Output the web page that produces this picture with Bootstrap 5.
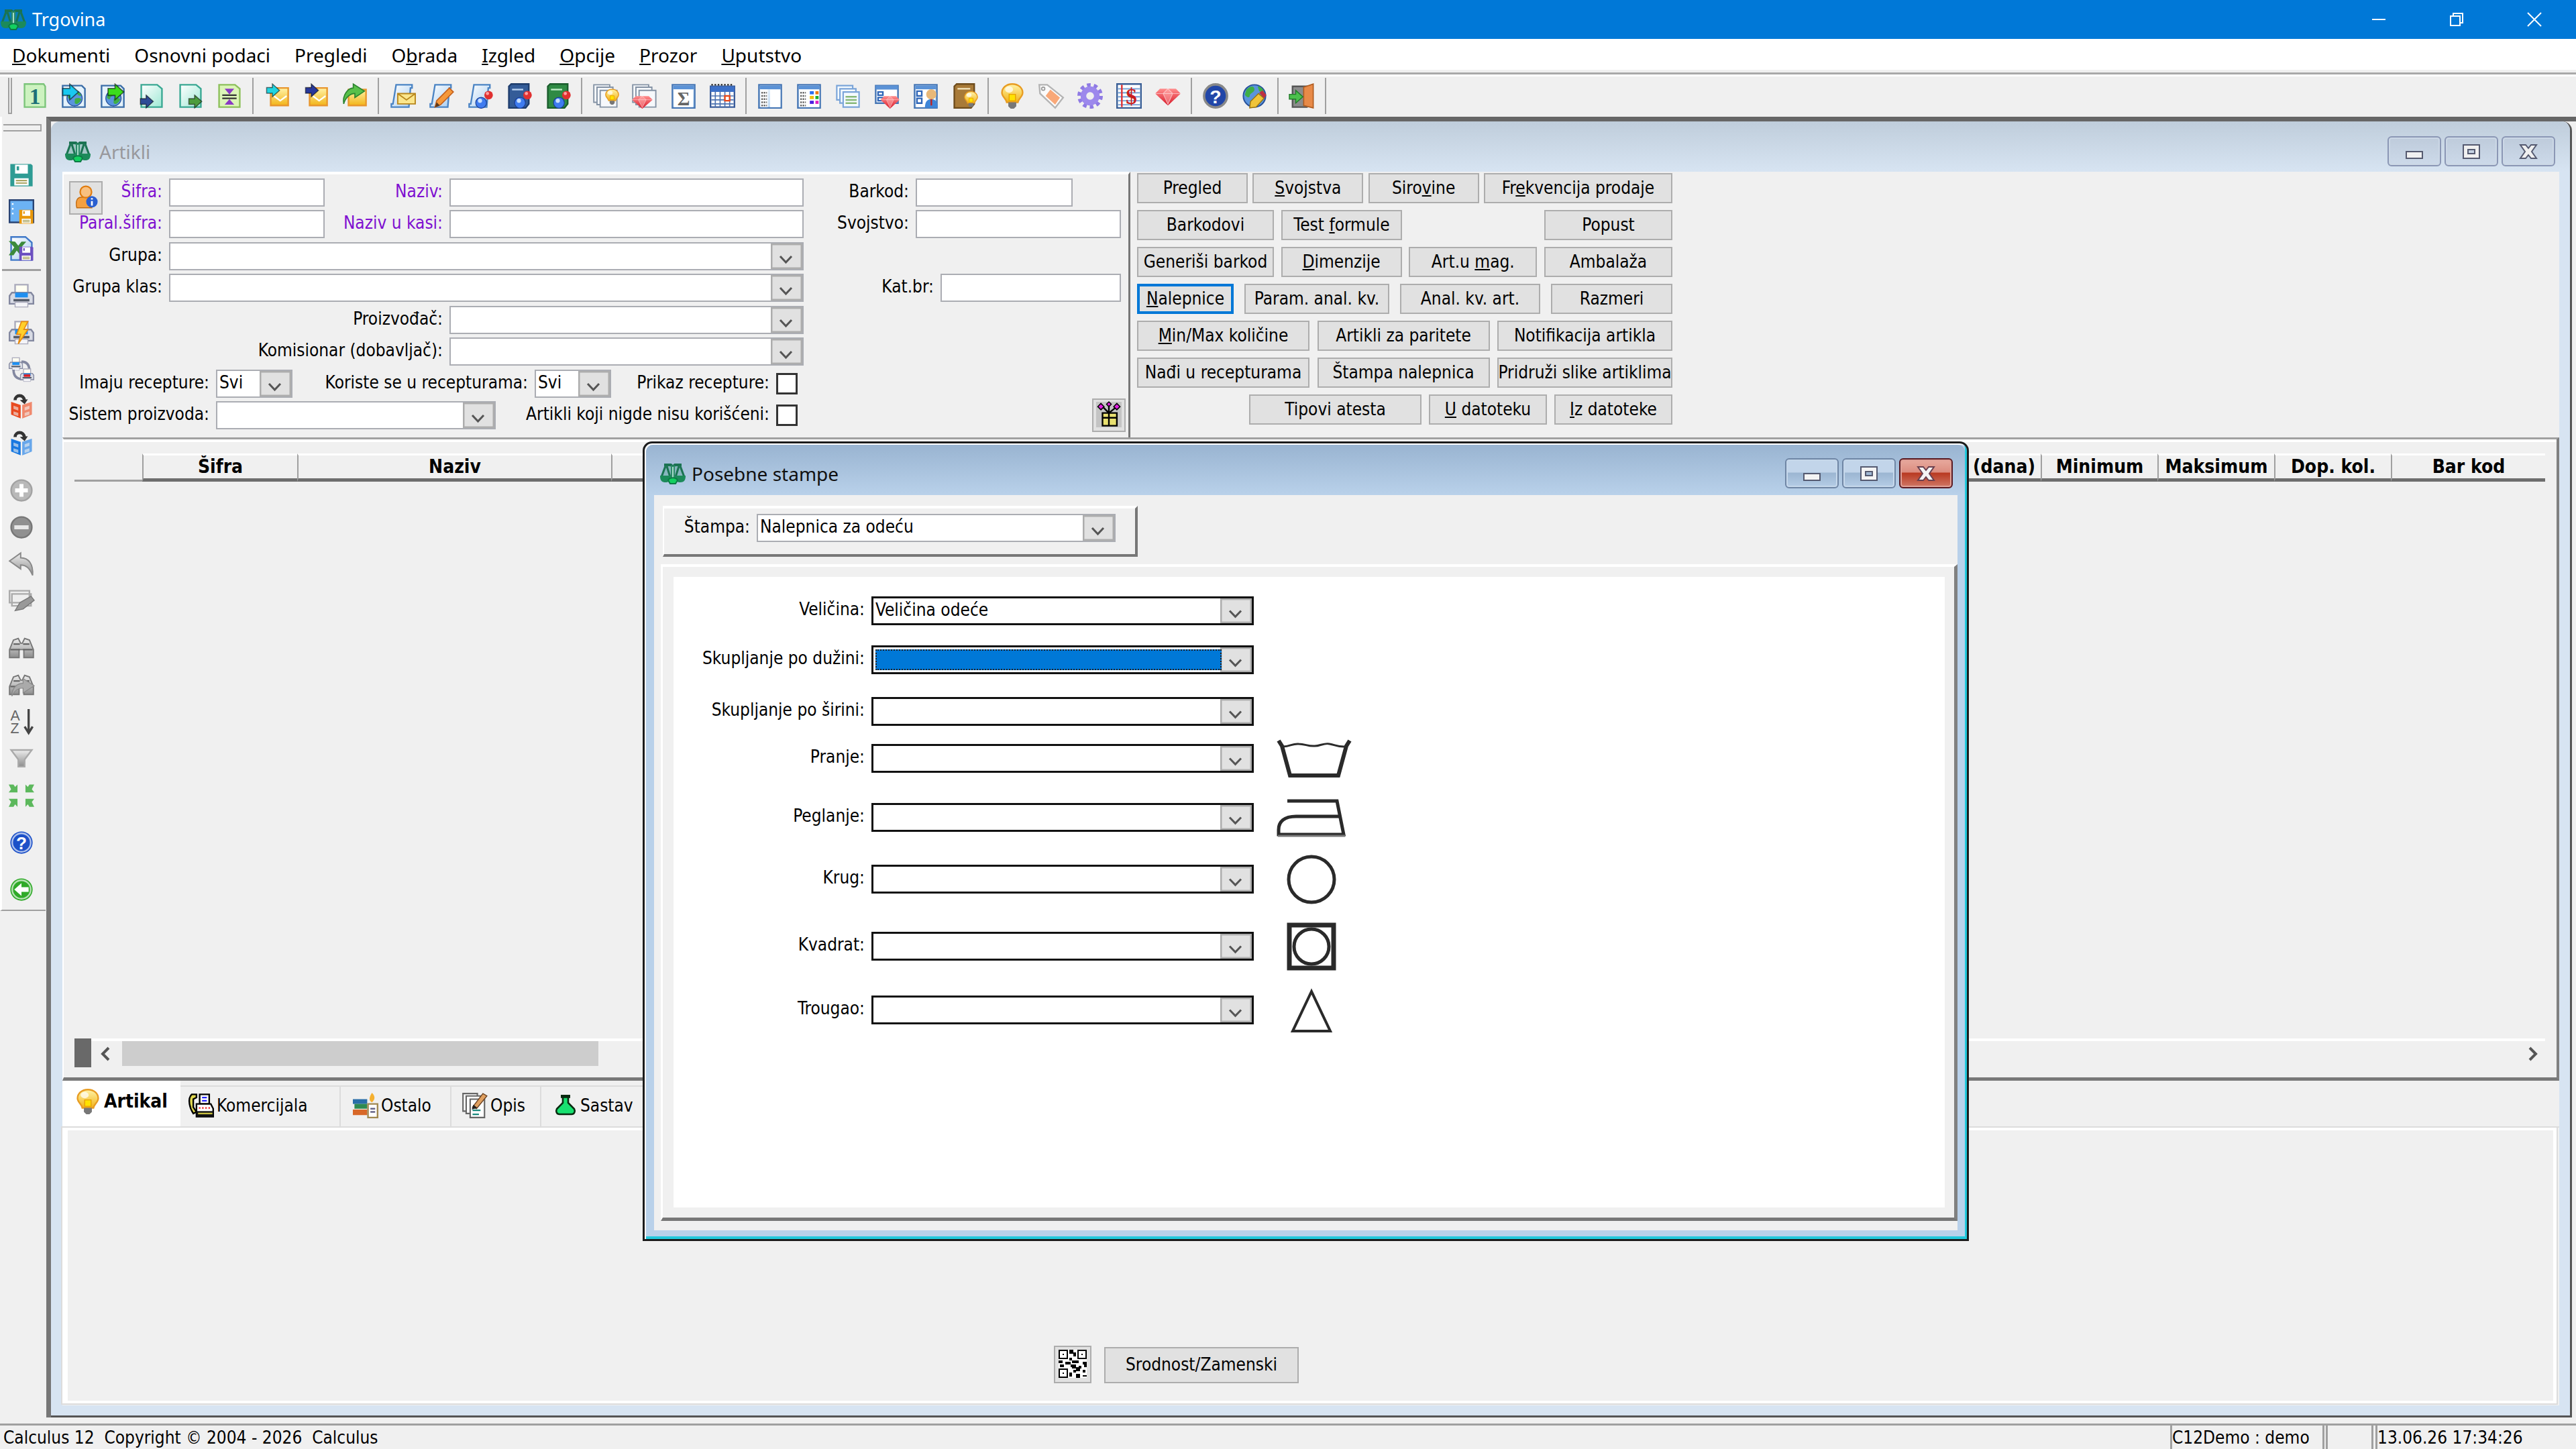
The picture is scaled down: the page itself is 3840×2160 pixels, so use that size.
<!DOCTYPE html>
<html lang="sr-Latn">
<head>
<meta charset="utf-8">
<meta name="viewport" content="width=device-width, initial-scale=1">
<title>Trgovina</title>
<link rel="stylesheet" href="https://cdn.jsdelivr.net/npm/bootstrap@5.3.0/dist/css/bootstrap.min.css">
<style>
:root{--face:#f0f0f0;--ui:"DejaVu Sans Condensed","DejaVu Sans",sans-serif;--caption:"Noto Sans","Open Sans",sans-serif}
body{font-family:var(--ui);font-size:26px;line-height:30px;color:#000;background:var(--face);min-height:100vh;overflow:hidden}
button,input,select{font:inherit;color:inherit;border-radius:0}
svg{display:block;flex:none;overflow:visible}
.ico{width:38px;height:40px}
.app-title{background:#0078d7;color:#fff;height:58px;font-family:var(--caption);font-size:27px}
.app-title button{width:116px;height:58px;background:none;border:0;color:#fff}
.logo{width:40px;height:32px}
.menu-bar{background:#fff;height:46px;font-family:var(--caption);font-size:28px;padding-left:18px;gap:36px}
.menu-bar a{color:#000;text-decoration:none;line-height:48px}
.tool-bar{height:66px;border-top:3px solid #a9a9a9;box-shadow:inset 0 3px #fff;margin-top:4px}
.tool-bar button,.side-bar button{background:none;border:0;padding:0;width:58px;height:58px}
.grip{width:6px;height:54px;border:2px solid #a0a0a0;border-top:0;margin:0 5px 0 12px}
.tsep{width:2px;height:54px;background:#a0a0a0;margin:0 6px 0 5px}
.side-bar{flex:none;width:68px;border-left:3px solid #fff;padding-top:11px;height:1184px;border-bottom:2px solid #a0a0a0}
.side-bar .sgrip{width:57px;height:11px;border:2px solid #a0a0a0;border-left:0;margin:0 0 37px 2px}
.side-bar button{height:55px;display:flex;align-items:center;justify-content:center}
.side-bar .sgroup{margin-bottom:15px}
.side-bar .sgroup.ruled{border-bottom:3px solid #a0a0a0;padding-bottom:3px;margin-bottom:9px;width:58px}
.mdi{border-left:7px solid #777;border-top:7px solid #666;position:relative;padding-right:6px;margin-left:1px}
.win{background:#d7e4f2;border-right:3px solid #555;border-bottom:3px solid #555;border-radius:14px 14px 0 0;padding:0 16px 15px 17px}
.win-title{height:75px;font-family:var(--caption);font-size:28px;color:#98989c;background:linear-gradient(#bfcddb,#d7e4f2);margin:0 -16px 0 -17px;padding:14px 22px 0 20px;border-radius:14px 14px 0 0}
.wbtns{gap:5px}
.wbtn{width:80px;height:45px;border:2px solid #8b97b5;border-radius:6px;background:linear-gradient(#becbdb,#cddaea);box-shadow:inset 0 0 0 2px #ccd8e6;padding:0}
.win-body{background:var(--face)}
.filters{width:1592px;border-top:4px solid #fff;border-left:2px solid #fff;border-right:3px solid #777;padding:6px 0 12px;height:396px;flex:none}
.frow{height:42px;display:flex;align-items:center}
.frow label,.care label,.stampa label{text-align:right;padding-right:10px;white-space:nowrap;flex:none;line-height:38px;height:42px}
.lb1{width:157px;height:42px}.lb2{width:186px}.lb3{width:167px}.lb4{width:204px}.lb5{width:575px}.lb6{width:227px}.lb7{width:361px}.lb8{width:246px}.lb9{width:418px}
.w232{width:232px}.w234{width:234px}.w269{width:269px}.w306{width:306px}.w528{width:528px}.w946{width:946px}.w114{width:114px}.w417{width:417px}
.violet{color:#7f10d0}
.fld{height:42px;border:2px solid #abadb3;background:#fff;padding:0 4px;flex:none;line-height:34px}
.pick{appearance:none;height:42px;border:2px solid #abadb3;padding:0 50px 4px 3px;flex:none;background:#fff url("data:image/svg+xml,%3Csvg xmlns='http://www.w3.org/2000/svg' width='47' height='38' viewBox='0 0 47 38' preserveAspectRatio='none'%3E%3Crect x='1' y='1' width='45' height='36' fill='%23e1e1e1' stroke='%23adadad' stroke-width='3'/%3E%3Cpath d='M14 19l8.500 9 8.500-9' fill='none' stroke='%23555' stroke-width='3'/%3E%3C/svg%3E") right 0 top 0/47px 100% no-repeat}
.chk{appearance:none;width:32px;height:32px;border:3px solid #333;background:#fff;margin:0}
.pbtn{height:45px;background:#e1e1e1;border:2px solid #adadad;padding:0 0 2px;white-space:nowrap;line-height:38px;flex:none;display:flex;justify-content:center;align-items:center}
.pbtn.on{border:4px solid #0078d7}
.icobtn{width:50px;height:50px}
.qrbtn{width:56px;height:56px}
.cmds{width:798px;margin:2px 0 0 10px;gap:10px}
.b144{width:144px}.b165{width:165px}.b176{width:176px}.b180{width:180px}.b181{width:181px}.b191{width:191px}.b204{width:204px}.b209{width:209px}.b216{width:216px}.b257{width:257px}.b261{width:261px}.b281{width:281px}.b290{width:290px;height:54px}
.gap11{gap:11px}
.sheet{border-top:3px solid #a0a0a0;border-left:2px solid #fff;border-right:4px solid #808080;border-bottom:5px solid #787878;box-shadow:inset 0 4px #fff;padding:21px 17px 15px 16px}
.cols{table-layout:fixed;width:100%;border-collapse:separate;border-spacing:0}
.cols th{height:42px;border-top:3px solid #fff;border-bottom:5px solid #6e6e6e;border-left:2px solid #a0a0a0;text-align:center;font-size:28px;line-height:32px;padding:0;white-space:nowrap;overflow:hidden}
.cols th:first-child{width:101px;border-left:0;border-top-color:transparent;border-bottom:3px solid #a0a0a0}
.c231{width:231px}.c468{width:468px}.c174{width:174px}.c230{width:230px}
.hscroll{border-top:4px solid #fff;height:43px;gap:13px}
.hscroll .split{width:25px;height:43px;background:#696969;margin-top:-4px}
.hscroll .thumb{width:710px;height:37px;background:#cdcdcd}
.tab-strip{height:70px;border-bottom:2px solid #dcdcdc}
.tab-strip a{color:#000;text-decoration:none;height:61px;border:2px solid #dcdcdc;border-left-width:0;border-bottom:0;display:flex;align-items:center;padding:0 0 4px 12px;gap:4px;margin-top:7px;flex:none}
.tab-strip a.on{background:#fff;height:70px;margin-top:0;width:176px;font-size:28px;font-weight:bold;padding:0 0 8px 18px;border:0}
.tab-strip .tw1{width:239px}.tab-strip .tw2{width:165px;padding-left:18px}.tab-strip .tw3{width:134px;padding-left:16px}.tab-strip .tw4{width:180px;padding-left:20px}
.page-box{height:411px;border:4px solid #fff;border-left-width:8px;border-right-width:5px;margin-right:4px;padding:0 0 26px 1470px;gap:19px;outline:2px solid #dcdcdc;margin-bottom:3px}
.dlg{position:absolute;left:882px;top:477px;width:1977px;height:1192px;border:3px solid #1c1c1c;border-radius:14px 14px 0 0;background:#b9d1ea;padding:0 14px 13px 14px;box-shadow:inset 2px 2px #fff,inset -3px -4px #22c8dc}
.dlg-title{height:75px;font-family:var(--caption);font-size:28px;margin:2px -11px 0 -12px;padding:10px 18px 0 20px;border-radius:10px 10px 0 0;background:linear-gradient(#99b4d1,#b9d1ea);color:#111}
.dlg-title .wbtn{background:linear-gradient(#c2d5ea 45%,#9cb6d2 50%,#b5cde6);border-color:#6f86a5;box-shadow:inset 0 0 0 2px #c6d8eb}
.dlg-title .wbtn.shut{background:linear-gradient(#e5a498 10%,#dc8d80 45%,#b93a22 50%,#d07866);border-color:#5a1a22;box-shadow:inset 0 0 0 2px #e0a096}
.dlg-body{background:var(--face);height:1096px;padding:16px 0 14px 10px}
.stampa{width:708px;height:76px;border-top:4px solid #fff;border-left:2px solid #fff;border-right:4px solid #777;border-bottom:4px solid #777;margin-left:3px;padding-top:8px}
.stampa label{width:138px}
.stampa .pick{width:535px}
.care-frame{margin-top:11px;height:979px;border-top:4px solid #fff;border-left:3px solid #fff;border-right:5px solid #808080;border-bottom:5px solid #777;padding:15px 14px 15px 16px}
.care{background:#fff;height:100%;display:grid;grid-template-columns:295px 570px 1fr;grid-template-rows:73px 77px 70px 88px 92px 100px 95px 42px;align-items:start;padding-top:29px}
.care .pick{width:100%;border:3px solid #111;height:43px}
.care .sym{height:43px;display:flex;align-items:center;padding-left:33px}
.care .sym svg{fill:none;stroke:#2a2a2a;stroke-width:5}
.hot{position:relative;display:block}
.hot .pick{display:block}
.hot::after{content:"";position:absolute;left:6px;top:6px;right:48px;bottom:6px;background:#0078d7;border:2px dotted #222;pointer-events:none}
.status{height:38px;border-top:3px solid #a0a0a0;white-space:pre;line-height:36px;padding-left:5px;margin-top:9px}
.status .cell{border-left:3px solid #a0a0a0;height:36px}
.s1{width:227px}.s2{width:5px}.s3{width:68px}.s4{width:6px}.s5{width:299px}
</style>
</head>
<body class="d-flex flex-column">
<svg width="0" height="0" class="position-absolute" aria-hidden="true">
<defs>
<linearGradient id="gy" x1="0" y1="0" x2="0" y2="1"><stop offset="0" stop-color="#fff3a8"/><stop offset="1" stop-color="#f2b418"/></linearGradient>
<linearGradient id="gb" x1="0" y1="0" x2="1" y2="1"><stop offset="0" stop-color="#fff"/><stop offset="1" stop-color="#a8cdf0"/></linearGradient>
<linearGradient id="gg" x1="0" y1="0" x2="1" y2="1"><stop offset="0" stop-color="#fff"/><stop offset="1" stop-color="#9ee8d4"/></linearGradient>
<linearGradient id="gr" x1="0" y1="0" x2="0" y2="1"><stop offset="0" stop-color="#ff8d8d"/><stop offset="1" stop-color="#d81828"/></linearGradient>
<linearGradient id="gs" x1="0" y1="0" x2="0" y2="1"><stop offset="0" stop-color="#eee"/><stop offset="1" stop-color="#8c8c8c"/></linearGradient>
<symbol id="scales" viewBox="0 0 40 32"><path d="M8 2h10l2 3 2-3h10l7 20-4 6H5l-4-6z" fill="#1c8a5a" fill-opacity=".25"/><g fill="none" stroke="#1b7352"><path d="M7 3h10l3 3 3-3h10" stroke-width="4"/><path d="M9 5L3 21M11 5l5 16M31 5l6 16M29 5l-5 16" stroke-width="3"/></g><path d="M1 19h16c0 8-3 10-8 10s-8-2-8-10zM23 19h16c0 8-3 10-8 10s-8-2-8-10z" fill="#1c8a5a"/><path d="M17 4h6v22h-6z" fill="#2c8a68"/><path d="M19 6h2v18h-2z" fill="#a8dcc8"/><path d="M13 26c2-5 12-5 14 0l-3 5h-8z" fill="#12d060" stroke="#0d7a45" stroke-width="2"/></symbol>
<symbol id="ar" viewBox="0 0 10 10"><path d="M.5 3h4V.500l5 4.500-5 4.500V7h-4z" fill="currentColor" stroke="#0008" stroke-width=".7"/></symbol>
<symbol id="paper" viewBox="0 0 16 16"><path d="M1.500 1h10l3 2.500V15h-13z" fill="url(#gg)" stroke="#3aa893"/></symbol>
<symbol id="globe" viewBox="0 0 16 16"><circle cx="8" cy="8" r="7" fill="#5a94dc" stroke="#27509a" stroke-width=".8"/><path d="M3 4c3-3 5-2 5 0s-3 2-3 4-3 0-3-1zM9 8c3-1 5 0 5 1s-3 5-5 4 0-3-1-4zM10 2c2 0 4 2 4 4l-3-1z" fill="#3fae46"/></symbol>
<symbol id="gem" viewBox="0 0 16 16" preserveAspectRatio="none"><path d="M3 2h10l3 4-8 10-8-10z" fill="url(#gr)"/><path d="M0 6h16M5 6l3 9 3-9-3-4z" fill="#ffb0b0" fill-opacity=".5" stroke="#fff" stroke-opacity=".5" stroke-width=".5"/></symbol>
<symbol id="bulb" viewBox="0 0 16 16"><path d="M8 .500c4 0 6.500 2.600 6.500 5.500 0 2.500-2.500 3.500-3 6h-7c-.500-2.500-3-3.500-3-6C1.500 3.100 4 .500 8 .500z" fill="url(#gy)" stroke="#e89c22"/><path d="M6 7h4v4H6z" fill="#ffe200" stroke="#e8a200" stroke-width=".6"/><path d="M5.500 12h5v2.500L9 16H7l-1.500-1.500z" fill="#777"/><ellipse cx="6" cy="4" rx="2.500" ry="2" fill="#fff" opacity=".7"/></symbol>
<symbol id="man" viewBox="0 0 16 16"><circle cx="13.200" cy="7.500" r="2.700" fill="#e03030"/><circle cx="12.500" cy="6.500" r="1" fill="#ffa0a0"/><circle cx="8.500" cy="12.300" r="3.400" fill="#3f7cf0" stroke="#1b3f96" stroke-width=".5"/><circle cx="7.800" cy="11" r="1.300" fill="#c8e0ff"/></symbol>
<symbol id="flop" viewBox="0 0 16 16"><path d="M1 1h13l1 1v13H1z" fill="currentColor"/><path d="M4 1.500h8V7H4zM3.500 10h9v4.500h-9z" fill="#fff"/><path d="M5 2.500h1.500v2.500H5z" fill="currentColor"/><path d="M4.500 11.500h7M4.500 13h7" stroke="#a09a50" stroke-width=".8"/></symbol>
<symbol id="win" viewBox="0 0 16 16"><path d="M1 1h14v14.500H1z" fill="url(#gb)" stroke="#4676b4"/><path d="M1.500 1.500h13v2.300h-13z" fill="#5b92d6"/></symbol>
<symbol id="scroll" viewBox="0 0 16 16"><path d="M4 1h10v2h-1L12 15H1v-2h1z" fill="url(#gb)" stroke="#4b84c4"/></symbol>
<symbol id="stack" viewBox="0 0 16 16"><g fill="#f6f8fb" stroke="#8492a4" stroke-width=".8"><path d="M.500 1h10v11H.500z"/><path d="M2.500 2.500h10v11h-10z"/><path d="M4.500 4.500h10.500V15H4.500z"/></g></symbol>
<symbol id="printer" viewBox="0 0 16 16"><path d="M4 1h8v6H4z" fill="#fffef2" stroke="#aab"/><path d="M2 6h12l1.500 2v5h-15V8z" fill="#d8dbe4" stroke="#8388a0"/><path d="M4 6h8v3H4z" fill="#1f8ff0"/><path d="M3 10h10v1.500H3z" fill="#555b68"/><path d="M4 12h8v3H4z" fill="#f4f4f8" stroke="#aab" stroke-width=".6"/></symbol>
<symbol id="cube" viewBox="0 0 16 16"><path d="M1.500 5l6 2v8.500l-6-2.500zM14.500 5l-6 2v8.500l6-2.500z" fill="currentColor"/><path d="M14.500 5l-6 2v8.500l6-2.500z" fill="#fff" opacity=".35"/><path d="M3 7.500l3 1v2l-3-1zM3 11l3 1v2l-3-1zM10 8.500l3-1v2l-3 1zM10 12l3-1v2l-3 1z" fill="#f0f0f0" opacity=".6"/><path d="M4 4C4 .500 9.500 0 10 4.500" fill="none" stroke="#333" stroke-width="2"/><path d="M7 4l5-.500-2 3z" fill="#333"/></symbol>
<symbol id="bino" viewBox="0 0 16 16"><path d="M3 3l3-1 1.500 3h1L10 2l3 1 2.500 6v5h-6V9h-3v5h-6V9z" fill="url(#gs)" stroke="#777" stroke-width=".8"/><path d="M1 9h6M9 9h6M3 5.500h4M9 5.500h4" stroke="#666"/></symbol>
<symbol id="glow" viewBox="0 0 16 16"><circle cx="8" cy="8" r="7" fill="currentColor"/><circle cx="8" cy="8" r="5.800" fill="none" stroke="#fff" stroke-opacity=".65" stroke-width="1"/></symbol>
</defs>
</svg>

<header class="app-title d-flex align-items-center">
  <svg class="logo"><use href="#scales"/></svg><span class="ms-2">Trgovina</span>
  <div class="ms-auto d-flex me-1">
    <button aria-label="Umanji" class="d-flex align-items-center justify-content-center"><svg width="20" height="20"><path d="M0 10h20" stroke="#fff" stroke-width="2"/></svg></button>
    <button aria-label="Vrati" class="d-flex align-items-center justify-content-center"><svg width="20" height="20" fill="none" stroke="#fff" stroke-width="2"><path d="M1 5h14v14H1zM5 5V1h14v14h-4"/></svg></button>
    <button aria-label="Zatvori" class="d-flex align-items-center justify-content-center"><svg width="20" height="20" stroke="#fff" stroke-width="2"><path d="M0 0l20 20M20 0L0 20"/></svg></button>
  </div>
</header>
<nav class="menu-bar d-flex" aria-label="Meni">
  <a href="#"><u>D</u>okumenti</a><a href="#">Osnovni podaci</a><a href="#">Pregledi</a><a href="#">O<u>b</u>rada</a><a href="#"><u>I</u>zgled</a><a href="#"><u>O</u>pcije</a><a href="#"><u>P</u>rozor</a><a href="#"><u>U</u>putstvo</a>
</nav>
<div class="tool-bar d-flex align-items-center" role="toolbar">
  <span class="grip"></span>
  <button class="d-flex align-items-center justify-content-center" aria-label="Dokument 1"><svg class="ico" viewBox="0 0 16 16"><path d="M1.500.500h12l1 1.500v13h-13z" fill="#cdf2c0" stroke="#7cc47a"/><text x="8" y="13" font-family="Liberation Serif" font-weight="bold" font-size="14" text-anchor="middle" fill="#1c7078">1</text></svg></button>
  <button class="d-flex align-items-center justify-content-center" aria-label="Preuzmi"><svg class="ico" viewBox="0 0 16 16"><path d="M1 1.500h12l2 2V15H1z" fill="#e4f2fb" stroke="#3c6ea8"/><use href="#globe" x="3" y="4" width="11" height="11"/><use href="#ar" x="0" y="0" width="12" height="11" color="#19c8f0"/></svg></button>
  <button class="d-flex align-items-center justify-content-center" aria-label="Pošalji"><svg class="ico" viewBox="0 0 16 16"><path d="M1 1.500h12l2 2V15H1z" fill="#e4f2fb" stroke="#3c6ea8"/><use href="#globe" x="3" y="4" width="11" height="11"/><use href="#ar" x="4" y="0" width="12" height="11" color="#3bdc1c"/></svg></button>
  <button class="d-flex align-items-center justify-content-center" aria-label="Ulaz"><svg class="ico" viewBox="0 0 16 16"><use href="#paper"/><use href="#ar" x="0" y="7" width="10" height="9" color="#2f4c96"/></svg></button>
  <button class="d-flex align-items-center justify-content-center" aria-label="Izlaz"><svg class="ico" viewBox="0 0 16 16"><use href="#paper"/><use href="#ar" x="6" y="7" width="10" height="9" color="#4c9c3c"/></svg></button>
  <button class="d-flex align-items-center justify-content-center" aria-label="Nivelacija"><svg class="ico" viewBox="0 0 16 16"><path d="M1.500 1h10l3 2.500V15h-13z" fill="#dcf5b8" stroke="#8cc05a"/><path d="M5 3.500h6L8 7zM5 13.500h6L8 10z" fill="#8a3ac4"/><path d="M3.500 7.500h9M3.500 9.500h9" stroke="#333"/></svg></button>
  <span class="tsep"></span>
  <button class="d-flex align-items-center justify-content-center" aria-label="Prijem"><svg class="ico" viewBox="0 0 16 16"><path d="M4 3h11v11H4z" fill="url(#gy)" stroke="#e8962c"/><path d="M6 8l4 3 4-3" fill="none" stroke="#fff"/><use href="#ar" x="0" y="0" width="11" height="9" color="#22d4e0"/></svg></button>
  <button class="d-flex align-items-center justify-content-center" aria-label="Otprema"><svg class="ico" viewBox="0 0 16 16"><path d="M4 3h11v11H4z" fill="url(#gy)" stroke="#e8962c"/><path d="M6 8l4 3 4-3" fill="none" stroke="#fff"/><use href="#ar" x="0" y="0" width="11" height="9" color="#28389a"/></svg></button>
  <button class="d-flex align-items-center justify-content-center" aria-label="Povrat"><svg class="ico" viewBox="0 0 16 16"><path d="M4 4h11v10H4z" fill="url(#gy)" stroke="#e8962c"/><path d="M1 13C0 7 4 3 7 3V.500l7 4.500-6 4V6.500C5 6.500 2 9 1 13z" fill="#58c04a" stroke="#2c8430" stroke-width=".7"/></svg></button>
  <span class="tsep"></span>
  <button class="d-flex align-items-center justify-content-center" aria-label="Pošta"><svg class="ico" viewBox="0 0 16 16"><use href="#scroll"/><path d="M5 6.500h11v6.500H5z" fill="#fbe68c" stroke="#b8861c" stroke-width=".8"/><path d="M5 6.500l5.500 4 5.500-4" fill="none" stroke="#b8861c" stroke-width=".8"/></svg></button>
  <button class="d-flex align-items-center justify-content-center" aria-label="Izmena"><svg class="ico" viewBox="0 0 16 16"><use href="#scroll"/><path d="M4 15l1-4 8-8 2.500 2.500-8 8z" fill="#f5983a" stroke="#c4601c" stroke-width=".7"/><path d="M4 15l1-3 2 2z" fill="#5a3a20"/></svg></button>
  <button class="d-flex align-items-center justify-content-center" aria-label="Partner"><svg class="ico" viewBox="0 0 16 16"><use href="#scroll"/><use href="#man" width="16" height="16"/></svg></button>
  <button class="d-flex align-items-center justify-content-center" aria-label="Knjiga plava"><svg class="ico" viewBox="0 0 16 16"><path d="M3 .500h11V13l-2 2.500H1.500V2z" fill="#345c98" stroke="#1e3c6c"/><path d="M3.500 4h7" stroke="#b9d2f2"/><use href="#man" width="16" height="16"/></svg></button>
  <button class="d-flex align-items-center justify-content-center" aria-label="Knjiga zelena"><svg class="ico" viewBox="0 0 16 16"><path d="M3 .500h11V13l-2 2.500H1.500V2z" fill="#2f8a44" stroke="#1a5c2c"/><path d="M3.500 4h7" stroke="#c0ecc8"/><use href="#man" width="16" height="16"/></svg></button>
  <span class="tsep"></span>
  <button class="d-flex align-items-center justify-content-center" aria-label="Pregledi"><svg class="ico" viewBox="0 0 16 16"><use href="#stack"/><use href="#bulb" x="7" y="3" width="10" height="11"/></svg></button>
  <button class="d-flex align-items-center justify-content-center" aria-label="Analiza"><svg class="ico" viewBox="0 0 16 16"><use href="#stack"/><use href="#gem" x="0" y="7" width="13" height="9"/></svg></button>
  <button class="d-flex align-items-center justify-content-center" aria-label="Zbir"><svg class="ico" viewBox="0 0 16 16"><use href="#win"/><path d="M2 4h12v11H2z" fill="#fff"/><text x="8" y="14" font-family="Liberation Serif" font-weight="bold" font-size="12" text-anchor="middle" fill="#666">Σ</text></svg></button>
  <button class="d-flex align-items-center justify-content-center" aria-label="Kalendar"><svg class="ico" viewBox="0 0 16 16"><path d="M.500 2h15v13H.500z" fill="#fff" stroke="#3a5c9a"/><path d="M.500 2h15v3.500H.500z" fill="#3c70c8"/><path d="M1 1h14" stroke="#222" stroke-dasharray="1 1"/><path d="M1 8h14M1 10.500h14M1 13h14M3.500 5v10M6.500 5v10M9.500 5v10M12.500 5v10" stroke="#4b71b0" stroke-width=".7"/><path d="M9.500 8h3v3h-3z" fill="#fff" stroke="#e84a1c"/></svg></button>
  <span class="tsep"></span>
  <button class="d-flex align-items-center justify-content-center" aria-label="Lista"><svg class="ico" viewBox="0 0 16 16"><use href="#win"/><path d="M2 4h4.500v11H2zM8 4h6.500v11H8z" fill="#fff"/><path d="M2.500 6h3.500M2.500 8h3.500M2.500 10h3.500M2.500 12h3.500M2.500 14h3.500" stroke="#666" stroke-dasharray="1 .5"/></svg></button>
  <button class="d-flex align-items-center justify-content-center" aria-label="Boje"><svg class="ico" viewBox="0 0 16 16"><use href="#win"/><path d="M2 4h12.500v11H2z" fill="#fff"/><path d="M2.500 6h3.500M2.500 8h3.500M2.500 10h3.500M2.500 12h3.500M2.500 14h3.500" stroke="#666" stroke-dasharray="1 .5"/><path d="M8.500 5H11v2H8.500z" fill="#2a6ef0"/><path d="M12 5h2v2h-2z" fill="#f07a10"/><path d="M8.500 8H11v2H8.500z" fill="#f0c010"/><path d="M12 8h2v2h-2z" fill="#20b030"/><path d="M8.500 11H11v2H8.500z" fill="#4a20e0"/><path d="M12 11h2v2h-2z" fill="#e020c0"/></svg></button>
  <button class="d-flex align-items-center justify-content-center" aria-label="Prozori"><svg class="ico" viewBox="0 0 16 16"><g fill="#f4faff" stroke="#7aa4d8" stroke-width=".9"><path d="M1 1.500h10v9H1z"/><path d="M3 3.500h10v9H3z"/><path d="M5 5.500h10V15H5z"/></g><path d="M6.500 8.500h7M6.500 10.500h7M6.500 12.500h7" stroke="#88b878"/></svg></button>
  <button class="d-flex align-items-center justify-content-center" aria-label="Omiljeno"><svg class="ico" viewBox="0 0 16 16"><path d="M1 1.500h14v11H1z" fill="#fff" stroke="#4676b4"/><path d="M1 1.500h14v2.500H1z" fill="#5b92d6"/><path d="M2.500 5.500h3v2h-3zM2.500 9h3v2h-3z" fill="#fff" stroke="#2f66b8"/><use href="#gem" x="4" y="7" width="12" height="9"/></svg></button>
  <button class="d-flex align-items-center justify-content-center" aria-label="Korisnik"><svg class="ico" viewBox="0 0 16 16"><use href="#win"/><path d="M2 4h12v11H2z" fill="#fff"/><path d="M2.500 5h3v3h-3zM2.500 9.500h3v3h-3z" fill="#fff" stroke="#2f66b8"/><path d="M7.500 15.500c0-4 1.500-5.500 4-5.500s4 1.500 4 5.500z" fill="#3f86d8"/><circle cx="11.500" cy="7" r="3.200" fill="#e8b878"/><path d="M11.500 10v4" stroke="#c02020"/></svg></button>
  <button class="d-flex align-items-center justify-content-center" aria-label="Katalog"><svg class="ico" viewBox="0 0 16 16"><path d="M3 .500h11V13l-2 2.500H1.500V2z" fill="#a87a38" stroke="#6e4c1c"/><path d="M3.500 3.500h8" stroke="#f2e2b8"/><use href="#bulb" x="7" y="5" width="10" height="10"/></svg></button>
  <span class="tsep"></span>
  <button class="d-flex align-items-center justify-content-center" aria-label="Savet"><svg class="ico"><use href="#bulb"/></svg></button>
  <button class="d-flex align-items-center justify-content-center" aria-label="Cene"><svg class="ico" viewBox="0 0 16 16"><path d="M.500 1l5 0 10 8-5 6.500-9.500-9z" fill="#fbfbfb" stroke="#b4b4b4"/><circle cx="3" cy="3.500" r="1" fill="none" stroke="#999" stroke-width=".7"/><path d="M7.500 4l6 5-3 4.500-6-5.500z" fill="#f9a878"/></svg></button>
  <button class="d-flex align-items-center justify-content-center" aria-label="Podešavanja"><svg class="ico" viewBox="0 0 16 16"><circle cx="8" cy="8" r="6.500" fill="none" stroke="#8f7ae4" stroke-width="3" stroke-dasharray="2.200 1.880"/><circle cx="8" cy="8" r="4.200" fill="none" stroke="#9c88ec" stroke-width="3.500"/></svg></button>
  <button class="d-flex align-items-center justify-content-center" aria-label="Finansije"><svg class="ico" viewBox="0 0 16 16"><path d="M.500.500h15v15H.500z" fill="#fff" stroke="#3a5f96"/><path d="M1 3.500h14M1 6h14M1 8.500h14M1 11h14M1 13.500h14" stroke="#8ab0dc"/><path d="M3.500 1v14" stroke="#e03030"/><text x="9.500" y="13" font-family="Liberation Serif" font-weight="bold" font-size="14" text-anchor="middle" fill="#c81e1e">$</text></svg></button>
  <button class="d-flex align-items-center justify-content-center" aria-label="Dijamant"><svg class="ico" viewBox="0 0 16 16"><use href="#gem" y="2" width="16" height="12"/></svg></button>
  <span class="tsep"></span>
  <button class="d-flex align-items-center justify-content-center" aria-label="Pomoć"><svg class="ico" viewBox="0 0 16 16"><circle cx="8" cy="8" r="7.200" fill="#2146a8" stroke="#888" stroke-width="1.500"/><text x="8" y="12.500" font-family="Liberation Sans" font-weight="bold" font-size="12" text-anchor="middle" fill="#fff">?</text></svg></button>
  <button class="d-flex align-items-center justify-content-center" aria-label="Internet"><svg class="ico" viewBox="0 0 16 16"><use href="#globe"/><path d="M5 15.500l.500-4 5-5 3.500 3-5 5.500z" fill="#f0c43a" stroke="#9a7410" stroke-width=".6"/><path d="M11 6l2-1.500 2.500 3-1.500 2z" fill="#c03040"/></svg></button>
  <span class="tsep"></span>
  <button class="d-flex align-items-center justify-content-center" aria-label="Izlaz iz programa"><svg class="ico" viewBox="0 0 16 16"><path d="M2 2h9v13H2z" fill="#8c8c8c" stroke="#555"/><path d="M9 2.500l6-2v15l-6-1.500z" fill="#e88a48" stroke="#b05c20" stroke-width=".7"/><path d="M0 7h4V4.500L8.500 8.500 4 12.500V10H0z" fill="#4cc04c" stroke="#207a28" stroke-width=".6"/></svg></button>
  <span class="tsep"></span>
</div>

<div class="d-flex flex-grow-1">
  <aside class="side-bar" role="toolbar">
    <div class="sgrip"></div>
    <div class="sgroup ruled">
      <button aria-label="Snimi"><svg class="ico" color="#2f9c94"><use href="#flop"/></svg></button>
      <button aria-label="Snimi prikaz"><svg class="ico" viewBox="0 0 16 16"><path d="M.500.500h15v14H.500z" fill="#6cb2f4" stroke="#2a4474"/><path d="M2 3h1M2 6h1M2 9h1" stroke="#fff"/><use href="#flop" x="6" y="6" width="10" height="10" color="#e8980c"/></svg></button>
      <button aria-label="Snimi u Excel"><svg class="ico" viewBox="0 0 16 16"><path d="M1.500.500h9l4 3.500v11h-13z" fill="url(#gb)" stroke="#3f78c8"/><path d="M0 3l4 .5 2 2.500 2-2.500h3L7.500 7.500l3 4H7L5 9l-2 3H0l3.500-5z" fill="#3c8a3c"/><use href="#flop" x="6" y="6" width="10" height="10" color="#6c50c0"/></svg></button>
    </div>
    <div class="sgroup">
      <button aria-label="Štampaj"><svg class="ico"><use href="#printer"/></svg></button>
      <button aria-label="Brza štampa"><svg class="ico" viewBox="0 0 16 16"><use href="#printer"/><path d="M8 1h4L9.500 6H12l-6 9 1.500-6H5z" fill="#ffd02a" stroke="#e88a10" stroke-width=".7"/></svg></button>
      <button aria-label="Štampači"><svg class="ico" viewBox="0 0 16 16"><use href="#printer" width="9" height="9"/><path d="M3 8c0 5 3 6 6 6M8 3c4 0 5 3 5 6" fill="none" stroke="#8388a0" stroke-width="1.500"/><use href="#printer" x="7" y="7" width="9" height="9"/><path d="M9.500 11h4v1.500h-4z" fill="#e02020"/></svg></button>
      <button aria-label="Crvena knjiga"><svg class="ico" color="#e84a20"><use href="#cube"/></svg></button>
      <button aria-label="Plava knjiga"><svg class="ico" color="#1878e0"><use href="#cube"/></svg></button>
    </div>
    <div class="sgroup">
      <button aria-label="Dodaj"><svg class="ico" viewBox="0 0 16 16"><circle cx="8" cy="8" r="6.500" fill="#b9b9b9" stroke="#a2a2a2"/><path d="M8 4v8M4 8h8" stroke="#fff" stroke-width="2.500"/></svg></button>
      <button aria-label="Obriši"><svg class="ico" viewBox="0 0 16 16"><circle cx="8" cy="8" r="6.500" fill="#909090" stroke="#777"/><path d="M3.500 8h9" stroke="#e8e8e8" stroke-width="2.500"/></svg></button>
      <button aria-label="Poništi"><svg class="ico" viewBox="0 0 16 16"><path d="M.500 6l7-5v3c5 0 8 4 7.500 11C13 10.500 11 8.500 7.500 8.500V11z" fill="url(#gs)" stroke="#888" stroke-width=".8"/></svg></button>
      <button aria-label="Izmeni"><svg class="ico" viewBox="0 0 16 16"><path d="M.500 1.500H13V9H.500zM2 3.500h12V11H2z" fill="#eee" stroke="#aaa"/><path d="M4 14l3-5 7-4 2 2.500-7 5.500z" fill="#999" stroke="#777" stroke-width=".6"/></svg></button>
    </div>
    <div class="sgroup">
      <button aria-label="Traži"><svg class="ico"><use href="#bino"/></svg></button>
      <button aria-label="Traži dalje"><svg class="ico" viewBox="0 0 16 16"><use href="#bino"/><path d="M2 15c0-6 4-8 7-8V4l7 4.500L9 13v-3c-3 0-5 1-7 5z" fill="#aaa" stroke="#888" stroke-width=".5"/></svg></button>
      <button aria-label="Sortiraj"><svg class="ico" viewBox="0 0 16 16"><g font-family="Liberation Sans" font-size="9" fill="#666"><text x="1" y="7">A</text><text x="1" y="15">Z</text></g><path d="M12.500 0v14M10 11l2.500 4 2.500-4" fill="none" stroke="#444" stroke-width="1.400"/></svg></button>
      <button aria-label="Filter"><svg class="ico" viewBox="0 0 16 16"><path d="M1.500 2.500h13L10 8.500V13H6V8.500z" fill="url(#gs)" stroke="#aaa"/></svg></button>
      <button aria-label="Skupi"><svg class="ico" viewBox="0 0 16 16"><g fill="#5cb85c"><path d="M0 1h3l1 1.500L5.500 1v5H0l1.500-2zM16 1h-3l-1 1.500L10.500 1v5H16l-1.500-2zM0 15h3l1-1.500L5.500 15v-5H0l1.500 2zM16 15h-3l-1-1.500L10.500 15v-5H16l-1.500 2z"/></g></svg></button>
    </div>
    <div class="sgroup"><button aria-label="Pomoć za prozor"><svg class="ico" viewBox="0 0 16 16" color="#1c50c8"><use href="#glow"/><text x="8" y="12" font-family="Liberation Sans" font-weight="bold" font-size="11" text-anchor="middle" fill="#fff">?</text></svg></button></div>
    <div class="sgroup"><button aria-label="Nazad"><svg class="ico" viewBox="0 0 16 16" color="#2faa28"><use href="#glow"/><path d="M3.500 8L8 4v2.500h4.500v3H8V12z" fill="#fff"/></svg></button></div>
  </aside>

  <main class="mdi flex-grow-1 d-flex">
    <section class="win flex-grow-1 d-flex flex-column">
      <div class="win-title d-flex align-items-center">
        <svg class="logo"><use href="#scales"/></svg><span class="ms-2 ps-1">Artikli</span>
        <div class="ms-auto d-flex wbtns">
          <button class="wbtn d-flex align-items-center justify-content-center" aria-label="Umanji prozor"><svg width="28" height="24"><path d="M2 12h24v10H2z" fill="#f0f0f0" stroke="#555a70" stroke-width="2"/></svg></button>
          <button class="wbtn d-flex align-items-center justify-content-center" aria-label="Uvećaj prozor"><svg width="28" height="24"><path d="M2 2h24v20H2zM9 9v6h10V9z" fill-rule="evenodd" fill="#f0f0f0" stroke="#555a70" stroke-width="2"/></svg></button>
          <button class="wbtn d-flex align-items-center justify-content-center" aria-label="Zatvori prozor"><svg width="28" height="24"><path d="M2 2h8l4 5 4-5h8l-7 10 7 10h-8l-4-5-4 5H2l7-10z" fill="#f0f0f0" stroke="#555a70" stroke-width="2"/></svg></button>
        </div>
      </div>
      <div class="win-body flex-grow-1 d-flex flex-column">
        <div class="d-flex">
          <form class="filters d-flex flex-column justify-content-between">
            <div class="frow"><div class="lb1 d-flex justify-content-between align-items-start"><button type="button" class="pbtn icobtn ms-2 mt-1" aria-label="Info"><svg width="36" height="38" viewBox="0 0 16 16"><path d="M2 15c-1-4 0-7 3-7h4c2 0 3 3 3 7z" fill="#f5a040" stroke="#c06a10" stroke-width=".6"/><circle cx="8" cy="4.500" r="3.800" fill="#f8c080" stroke="#e07c10"/><circle cx="12" cy="11" r="3.800" fill="#2a5fd0"/><path d="M12 8.500v1M12 10.500v3" stroke="#fff" stroke-width="1.200"/></svg></button><label class="violet" for="f1">Šifra:</label></div><input id="f1" class="fld w232"><label class="lb2 violet" for="f2">Naziv:</label><input id="f2" class="fld w528"><label class="lb3" for="f3">Barkod:</label><input id="f3" class="fld w234"></div>
            <div class="frow"><label class="lb1 violet" for="f4">Paral.šifra:</label><input id="f4" class="fld w232"><label class="lb2 violet" for="f5">Naziv u kasi:</label><input id="f5" class="fld w528"><label class="lb3" for="f6">Svojstvo:</label><input id="f6" class="fld w306"></div>
            <div class="frow"><label class="lb1" for="f7">Grupa:</label><select id="f7" class="pick w946"><option></option></select></div>
            <div class="frow"><label class="lb1" for="f8">Grupa klas:</label><select id="f8" class="pick w946"><option></option></select><label class="lb4" for="f9">Kat.br:</label><input id="f9" class="fld w269"></div>
            <div class="frow"><label class="lb5" for="f10">Proizvođač:</label><select id="f10" class="pick w528"><option></option></select></div>
            <div class="frow"><label class="lb5" for="f11">Komisionar (dobavljač):</label><select id="f11" class="pick w528"><option></option></select></div>
            <div class="frow"><label class="lb6" for="f12">Imaju recepture:</label><select id="f12" class="pick w114"><option>Svi</option></select><label class="lb7" for="f13">Koriste se u recepturama:</label><select id="f13" class="pick w114"><option>Svi</option></select><label class="lb8" for="f14">Prikaz recepture:</label><input id="f14" type="checkbox" class="chk"></div>
            <div class="frow"><label class="lb6" for="f15">Sistem proizvoda:</label><select id="f15" class="pick w417"><option></option></select><label class="lb9" for="f16">Artikli koji nigde nisu korišćeni:</label><input id="f16" type="checkbox" class="chk"><button type="button" class="pbtn icobtn ms-auto me-1" aria-label="Poklon"><svg width="38" height="38" viewBox="0 0 16 16"><path d="M0 0h16v16H0z" fill="#c4c4c4"/><path d="M4 7h9v8H4z" fill="#e8e070" stroke="#000"/><path d="M8 7v8M4 10h9" stroke="#000"/><path d="M8 7L4 3M8 7l5-4M8 7V2" stroke="#000"/><path d="M3 1l2 2-2 2-2-2zM13 1l2 2-2 2-2-2zM8 0l1.500 1.500L8 3 6.500 1.500z" fill="#e020e0" stroke="#000" stroke-width=".6"/></svg></button></div>
          </form>
          <div class="cmds d-flex flex-column">
            <div class="d-flex justify-content-between"><button class="pbtn b165">Pregled</button><button class="pbtn b165"><span><u>S</u>vojstva</span></button><button class="pbtn b165"><span>Siro<u>v</u>ine</span></button><button class="pbtn b281"><span>Fr<u>e</u>kvencija prodaje</span></button></div>
            <div class="d-flex gap11"><button class="pbtn b204">Barkodovi</button><button class="pbtn b180"><span>Test <u>f</u>ormule</span></button><button class="pbtn b191 ms-auto">Popust</button></div>
            <div class="d-flex justify-content-between"><button class="pbtn b204">Generiši barkod</button><button class="pbtn b180"><span><u>D</u>imenzije</span></button><button class="pbtn b191"><span>Art.u <u>m</u>ag.</span></button><button class="pbtn b191">Ambalaža</button></div>
            <div class="d-flex justify-content-between"><button class="pbtn on b144"><span><u>N</u>alepnice</span></button><button class="pbtn b216">Param. anal. kv.</button><button class="pbtn b209">Anal. kv. art.</button><button class="pbtn b181">Razmeri</button></div>
            <div class="d-flex justify-content-between"><button class="pbtn b257"><span><u>M</u>in/Max količine</span></button><button class="pbtn b257">Artikli za paritete</button><button class="pbtn b261">Notifikacija artikla</button></div>
            <div class="d-flex justify-content-between"><button class="pbtn b257">Nađi u recepturama</button><button class="pbtn b257">Štampa nalepnica</button><button class="pbtn b261">Pridruži slike artiklima</button></div>
            <div class="d-flex justify-content-end gap11"><button class="pbtn b257">Tipovi atesta</button><button class="pbtn b176"><span><u>U</u> datoteku</span></button><button class="pbtn b176"><span><u>I</u>z datoteke</span></button></div>
          </div>
        </div>
        <div class="sheet flex-grow-1 d-flex flex-column">
          <table class="cols"><thead><tr><th></th><th class="c231">Šifra</th><th class="c468">Naziv</th><th class="text-end pe-2">(dana)</th><th class="c174">Minimum</th><th class="c174">Maksimum</th><th class="c174">Dop. kol.</th><th class="c230">Bar kod</th></tr></thead></table>
          <div class="hscroll d-flex mt-auto"><span class="split"></span><svg width="16" height="37" class="me-1"><path d="M13 10L4 19l9 9" fill="none" stroke="#555" stroke-width="4"/></svg><span class="thumb"></span><svg class="ms-auto me-2" width="20" height="37"><path d="M5 10l9 9-9 9" fill="none" stroke="#555" stroke-width="4"/></svg></div>
        </div>
        <nav class="tab-strip d-flex">
          <a href="#" class="on"><svg width="40" height="38"><use href="#bulb"/></svg>Artikal</a>
          <a href="#" class="tw1"><svg class="ico" viewBox="0 0 16 16"><path d="M2 1c-3 3-1 9 1 12l2-1-2-3V4l2-1V1z" fill="#e0d850" stroke="#000"/><path d="M7 1h6v6H7z" fill="#fff" stroke="#000"/><path d="M8.500 3h3M8.500 5h3" stroke="#22f"/><path d="M5 7h9l1.500 3v5H5z" fill="#fff" stroke="#000"/><path d="M6.500 9.500h7" stroke="#e22" stroke-dasharray="1 1"/><path d="M5 11.500h10.500V15H5z" fill="#111"/><path d="M6 13h9" stroke="#c8c040"/></svg>Komercijala</a>
          <a href="#" class="tw2"><svg class="ico" viewBox="0 0 16 16"><path d="M0 4h9v3H0z" fill="#2a6ea8"/><path d="M1 7h8v3H1z" fill="#2f8a50"/><path d="M0 10.500h9V14H0z" fill="#d86828"/><path d="M12 0c3 3 1 5 0 6-2-1-2-3 0-6z" fill="#f5b030"/><path d="M9.500 7h6v8.500h-6z" fill="#fff" stroke="#a08850"/><path d="M11 10h3M11 12h3" stroke="#668"/></svg>Ostalo</a>
          <a href="#" class="tw3"><svg class="ico" viewBox="0 0 16 16"><g fill="#fff" stroke="#666" stroke-width=".9"><path d="M.500.500h9v11h-9z"/><path d="M2.500 2h9v11h-9z"/><path d="M5 4h9v11.500H5z"/></g><path d="M6.500 11h5M6.500 13.500h4" stroke="#18887c"/><path d="M6.500 9L13 .500l2.500 1.500L9 10z" fill="#e0a060" stroke="#6a4020" stroke-width=".6"/><path d="M6 10.500l1-3 2.500 2z" fill="#222"/></svg>Opis</a>
          <a href="#" class="tw4"><svg width="34" height="32" viewBox="0 0 17 16"><path d="M6 2v4L1.500 10.500c-1 2 0 4 2 4h9c2 0 3-2 2-4L10 6V2" fill="#18e070" stroke="#0a2a10" stroke-width="1.300"/><path d="M4.500 1.200h7" stroke="#0a2a10" stroke-width="2.400"/></svg>Sastav</a>
        </nav>
        <div class="page-box d-flex align-items-end">
          <button class="pbtn qrbtn" aria-label="QR kod"><svg width="42" height="42" viewBox="0 0 21 21" shape-rendering="crispEdges"><path d="M0 0h21v21H0z" fill="#fff"/><path d="M.500.500h6v6h-6zM14.500.500h6v6h-6zM.500 14.500h6v6h-6z" fill="none" stroke="#000"/><path d="M3 3h1v1H3zM17 3h1v1h-1zM3 17h1v1H3zM8 0h3v2h2v3h-2V3H8zM8 6h2v2H8zM0 8h3v2H0zM5 9h4v2H5zM10 8h5v2h-5zM18 9h3v4h-2v-2h-1zM9 11h4v2h3v3h-3v-2h-3v-1H9zM1 11h3v2H1zM8 17h2v3H8zM11 15h2v2h-2zM15 12h2v2h-2zM18 15h2v2h-2zM13 18h3v3h-3zM18 19h3v1h-3z" fill="#000"/></svg></button>
          <button class="pbtn b290">Srodnost/Zamenski</button>
        </div>
      </div>
    </section>

    <section class="dlg" role="dialog" aria-label="Posebne stampe">
      <div class="dlg-title d-flex align-items-center">
        <svg class="logo"><use href="#scales"/></svg><span class="ms-2">Posebne stampe</span>
        <div class="ms-auto d-flex wbtns">
          <button class="wbtn d-flex align-items-center justify-content-center" aria-label="Umanji dijalog"><svg width="28" height="24"><path d="M2 12h24v10H2z" fill="#f4f4f4" stroke="#555a70" stroke-width="2"/></svg></button>
          <button class="wbtn d-flex align-items-center justify-content-center" aria-label="Uvećaj dijalog"><svg width="28" height="24"><path d="M2 2h24v20H2zM9 9v6h10V9z" fill-rule="evenodd" fill="#f4f4f4" stroke="#555a70" stroke-width="2"/></svg></button>
          <button class="wbtn shut d-flex align-items-center justify-content-center" aria-label="Zatvori dijalog"><svg width="28" height="24"><path d="M2 2h8l4 5 4-5h8l-7 10 7 10h-8l-4-5-4 5H2l7-10z" fill="#f4f4f4" stroke="#6a4050" stroke-width="2"/></svg></button>
        </div>
      </div>
      <div class="dlg-body">
        <div class="stampa d-flex"><label for="d0">Štampa:</label><select id="d0" class="pick"><option>Nalepnica za odeću</option></select></div>
        <div class="care-frame">
          <form class="care">
            <label for="d1">Veličina:</label><select id="d1" class="pick"><option>Veličina odeće</option></select><span></span>
            <label for="d2">Skupljanje po dužini:</label><span class="hot"><select id="d2" class="pick"><option></option></select></span><span></span>
            <label for="d3">Skupljanje po širini:</label><select id="d3" class="pick"><option></option></select><span></span>
            <label for="d4">Pranje:</label><select id="d4" class="pick"><option></option></select><span class="sym"><svg width="114" height="62"><path d="M4 4l5 8 12 44h72l12-44 5-8" stroke-width="6"/><path d="M10 13c12 0 14-5 24-4 10 0 14 4 24 3 8 0 14-5 22-3 8 1 12 5 24 4" stroke-width="3"/></svg></span>
            <label for="d5">Peglanje:</label><select id="d5" class="pick"><option></option></select><span class="sym"><svg width="106" height="60"><path d="M17 5h74l10 50H4V48c0-12 8-20 26-20h64"/><path d="M3 57h100" stroke="#777" stroke-width="3"/></svg></span>
            <label for="d6">Krug:</label><select id="d6" class="pick"><option></option></select><span class="sym"><svg class="ms-3" width="76" height="76"><circle cx="37" cy="38" r="34"/></svg></span>
            <label for="d7">Kvadrat:</label><select id="d7" class="pick"><option></option></select><span class="sym"><svg class="ms-3" width="76" height="72"><path d="M4 4h66v64H4z" stroke-width="7"/><circle cx="37" cy="36" r="26"/></svg></span>
            <label for="d8">Trougao:</label><select id="d8" class="pick"><option></option></select><span class="sym"><svg class="ms-3" width="76" height="76"><path d="M37 10L9 69h56z" stroke-width="4"/></svg></span>
          </form>
        </div>
      </div>
    </section>
  </main>
</div>
<footer class="status d-flex"><span>Calculus 12  Copyright © 2004 - 2026  Calculus</span><span class="cell s1 ms-auto">C12Demo : demo</span><span class="cell s2"></span><span class="cell s3"></span><span class="cell s4"></span><span class="cell s5">13.06.26 17:34:26</span></footer>
<script src="https://cdn.jsdelivr.net/npm/bootstrap@5.3.0/dist/js/bootstrap.bundle.min.js"></script>
</body>
</html>
